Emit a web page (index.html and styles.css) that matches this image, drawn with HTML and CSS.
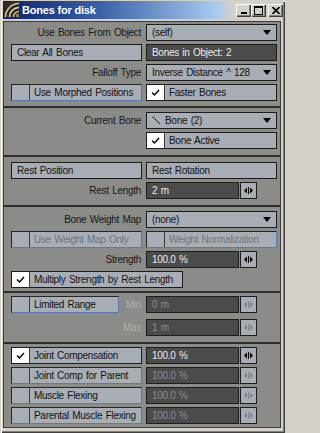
FILE: index.html
```html
<!DOCTYPE html>
<html>
<head>
<meta charset="utf-8">
<link rel="stylesheet" href="styles.css">
</head>
<body>
<div class="window">
  <div class="titlebar">
    <svg class="appicon" width="16" height="16" viewBox="0 0 16 16">
      <rect width="16" height="16" fill="#2e2b26"/>
      <path d="M1.5 15 A13.5 13.5 0 0 1 15 1.5" fill="none" stroke="#cfc39a" stroke-width="1.6"/>
      <path d="M5.5 15 A9.5 9.5 0 0 1 15 5.5" fill="none" stroke="#e4dcc0" stroke-width="1.6"/>
      <path d="M9.5 15 A5.5 5.5 0 0 1 15 9.5" fill="none" stroke="#bfb28a" stroke-width="1.6"/>
      <rect x="12" y="12" width="3" height="3" fill="#8a7f62"/>
    </svg>
    <span class="title">Bones for disk</span>
    <div class="capbtns">
      <div class="capbtn"><svg width="8" height="8" viewBox="0 0 8 8"><rect x="1" y="6" width="6" height="2" fill="#000"/></svg></div>
      <div class="capbtn"><svg width="9" height="9" viewBox="0 0 9 9"><rect x="0.5" y="0.5" width="8" height="8" fill="none" stroke="#000"/><rect x="0" y="0" width="9" height="2" fill="#000"/></svg></div>
      <div class="capbtn close"><svg width="8" height="7" viewBox="0 0 8 7"><path d="M0.5 0 L7.5 7 M7.5 0 L0.5 7" stroke="#000" stroke-width="1.6"/></svg></div>
    </div>
  </div>

  <div class="panel">
    <div class="sec sec1">
      <div class="row">
        <div class="lbl">Use Bones From Object</div>
        <div class="ctl drop"><span class="dt">(self)</span><span class="arr"><svg width="8" height="5" viewBox="0 0 8 5"><path d="M0 0 H8 L4 5 Z" fill="#000"/></svg></span></div>
      </div>
      <div class="row">
        <div class="ctl btn">Clear All Bones</div>
        <div class="ctl field">Bones in Object: 2</div>
      </div>
      <div class="row">
        <div class="lbl">Falloff Type</div>
        <div class="ctl drop"><span class="dt">Inverse Distance ^ 128</span><span class="arr"><svg width="8" height="5" viewBox="0 0 8 5"><path d="M0 0 H8 L4 5 Z" fill="#000"/></svg></span></div>
      </div>
      <div class="row">
        <div class="ctl tog"><span class="box"></span><span class="tt">Use Morphed Positions</span></div>
        <div class="ctl tog on"><span class="box"><svg width="9" height="7" viewBox="0 0 9 7"><path d="M1 3.5 L3.5 6 L8 1" fill="none" stroke="#000" stroke-width="1.4"/></svg></span><span class="tt">Faster Bones</span></div>
      </div>
    </div>
    <div class="sep"></div>

    <div class="sec sec2">
      <div class="row">
        <div class="lbl">Current Bone</div>
        <div class="ctl drop"><svg class="boneico" width="9" height="9" viewBox="0 0 9 9"><path d="M2 0.5 L0.5 2 M1.5 1.5 L8 8" fill="none" stroke="#111" stroke-width="1"/></svg><span class="dt">Bone (2)</span><span class="arr"><svg width="8" height="5" viewBox="0 0 8 5"><path d="M0 0 H8 L4 5 Z" fill="#000"/></svg></span></div>
      </div>
      <div class="row">
        <div></div>
        <div class="ctl tog on"><span class="box"><svg width="9" height="7" viewBox="0 0 9 7"><path d="M1 3.5 L3.5 6 L8 1" fill="none" stroke="#000" stroke-width="1.4"/></svg></span><span class="tt">Bone Active</span></div>
      </div>
    </div>
    <div class="sep"></div>

    <div class="sec sec3">
      <div class="row">
        <div class="ctl btn">Rest Position</div>
        <div class="ctl btn">Rest Rotation</div>
      </div>
      <div class="row">
        <div class="lbl">Rest Length</div>
        <div class="num"><div class="ctl field">2 m</div><div class="spin"><svg width="9" height="7" viewBox="0 0 9 7"><path d="M0 3.5 L3 0.5 V6.5 Z M9 3.5 L6 0.5 V6.5 Z" fill="#000"/><rect x="4" y="0" width="1" height="7" fill="#000"/></svg></div></div>
      </div>
    </div>
    <div class="sep"></div>

    <div class="sec sec4">
      <div class="row">
        <div class="lbl">Bone Weight Map</div>
        <div class="ctl drop"><span class="dt">(none)</span><span class="arr"><svg width="8" height="5" viewBox="0 0 8 5"><path d="M0 0 H8 L4 5 Z" fill="#000"/></svg></span></div>
      </div>
      <div class="row">
        <div class="ctl tog dis"><span class="box"></span><span class="tt">Use Weight Map Only</span></div>
        <div class="ctl tog dis"><span class="box"></span><span class="tt">Weight Normalization</span></div>
      </div>
      <div class="row">
        <div class="lbl">Strength</div>
        <div class="num"><div class="ctl field">100.0 %</div><div class="spin"><svg width="9" height="7" viewBox="0 0 9 7"><path d="M0 3.5 L3 0.5 V6.5 Z M9 3.5 L6 0.5 V6.5 Z" fill="#000"/><rect x="4" y="0" width="1" height="7" fill="#000"/></svg></div></div>
      </div>
      <div class="row">
        <div class="ctl tog on wide"><span class="box"><svg width="9" height="7" viewBox="0 0 9 7"><path d="M1 3.5 L3.5 6 L8 1" fill="none" stroke="#000" stroke-width="1.4"/></svg></span><span class="tt">Multiply Strength by Rest Length</span></div>
      </div>
    </div>
    <div class="sep"></div>

    <div class="sec sec5">
      <div class="row">
        <div class="split">
          <div class="ctl tog short"><span class="box"></span><span class="tt">Limited Range</span></div>
          <div class="lbl dim">Min</div>
        </div>
        <div class="num"><div class="ctl field dis">0 m</div><div class="spin dis"><svg width="9" height="7" viewBox="0 0 9 7"><path d="M0 3.5 L3 0.5 V6.5 Z M9 3.5 L6 0.5 V6.5 Z" fill="#7c8088"/><rect x="4" y="0" width="1" height="7" fill="#7c8088"/></svg></div></div>
      </div>
      <div class="row">
        <div class="lbl dim">Max</div>
        <div class="num"><div class="ctl field dis">1 m</div><div class="spin dis"><svg width="9" height="7" viewBox="0 0 9 7"><path d="M0 3.5 L3 0.5 V6.5 Z M9 3.5 L6 0.5 V6.5 Z" fill="#7c8088"/><rect x="4" y="0" width="1" height="7" fill="#7c8088"/></svg></div></div>
      </div>
    </div>
    <div class="sep"></div>

    <div class="sec sec6">
      <div class="row">
        <div class="ctl tog on"><span class="box"><svg width="9" height="7" viewBox="0 0 9 7"><path d="M1 3.5 L3.5 6 L8 1" fill="none" stroke="#000" stroke-width="1.4"/></svg></span><span class="tt">Joint Compensation</span></div>
        <div class="num"><div class="ctl field">100.0 %</div><div class="spin"><svg width="9" height="7" viewBox="0 0 9 7"><path d="M0 3.5 L3 0.5 V6.5 Z M9 3.5 L6 0.5 V6.5 Z" fill="#000"/><rect x="4" y="0" width="1" height="7" fill="#000"/></svg></div></div>
      </div>
      <div class="row">
        <div class="ctl tog"><span class="box"></span><span class="tt">Joint Comp for Parent</span></div>
        <div class="num"><div class="ctl field dis">100.0 %</div><div class="spin dis"><svg width="9" height="7" viewBox="0 0 9 7"><path d="M0 3.5 L3 0.5 V6.5 Z M9 3.5 L6 0.5 V6.5 Z" fill="#7c8088"/><rect x="4" y="0" width="1" height="7" fill="#7c8088"/></svg></div></div>
      </div>
      <div class="row">
        <div class="ctl tog"><span class="box"></span><span class="tt">Muscle Flexing</span></div>
        <div class="num"><div class="ctl field dis">100.0 %</div><div class="spin dis"><svg width="9" height="7" viewBox="0 0 9 7"><path d="M0 3.5 L3 0.5 V6.5 Z M9 3.5 L6 0.5 V6.5 Z" fill="#7c8088"/><rect x="4" y="0" width="1" height="7" fill="#7c8088"/></svg></div></div>
      </div>
      <div class="row">
        <div class="ctl tog"><span class="box"></span><span class="tt">Parental Muscle Flexing</span></div>
        <div class="num"><div class="ctl field dis">100.0 %</div><div class="spin dis"><svg width="9" height="7" viewBox="0 0 9 7"><path d="M0 3.5 L3 0.5 V6.5 Z M9 3.5 L6 0.5 V6.5 Z" fill="#7c8088"/><rect x="4" y="0" width="1" height="7" fill="#7c8088"/></svg></div></div>
      </div>
    </div>
  </div>
</div>
</body>
</html>
```
FILE: styles.css
```css
html, body {
  margin: 0;
  padding: 0;
  background: #d4d0c8;
}
.window {
  width: 285px;
  height: 433px;
  box-sizing: border-box;
  padding: 1px 2px 5px 3px;
  background: #d4d0c8;
  display: flex;
  flex-direction: column;
  box-shadow: inset 1px 1px 0 #d4d0c8, inset 2px 2px 0 #ffffff, inset -1px -1px 0 #404040, inset -2px -2px 0 #808080;
  font-family: "Liberation Sans", Arial, sans-serif;
}
.titlebar {
  height: 18px;
  flex: none;
  display: flex;
  align-items: center;
  background: linear-gradient(90deg, #0a246a 0%, #3a62a8 35%, #a6caf0 76%, #d4d0c8 82%);
}
.appicon {
  flex: none;
  margin-left: 1px;
  display: block;
}
.title {
  margin-left: 2px;
  color: #ffffff;
  font-weight: bold;
  font-size: 11px;
  letter-spacing: -0.2px;
  white-space: nowrap;
}
.capbtns {
  margin-left: auto;
  display: flex;
  align-items: center;
}
.capbtn {
  width: 15px;
  height: 13px;
  box-sizing: border-box;
  background: #d4d0c8;
  display: flex;
  align-items: center;
  justify-content: center;
  box-shadow: inset 1px 1px 0 #ffffff, inset -1px -1px 0 #404040, inset -2px -2px 0 #808080;
}
.capbtn svg { display: block; }
.capbtn.close {
  margin-left: 2px;
}
.panel {
  flex: 1;
  margin-top: 2px;
  margin-right: 2px;
  background: #8b8b87;
  border: 1px solid #3c3c3c;
  display: flex;
  flex-direction: column;
}
.sec {
  display: flex;
  flex-direction: column;
  gap: 3px;
  padding-left: 7px;
  padding-right: 3px;
}
.sec1 { padding-top: 2px; padding-bottom: 5px; }
.sec2 { padding-top: 4px; padding-bottom: 6px; }
.sec3 { padding-top: 5px; padding-bottom: 6px; }
.sec4 { padding-top: 4px; padding-bottom: 3px; }
.sec5 { padding-top: 3px; padding-bottom: 6px; gap: 6px; }
.sec6 { padding-top: 3px; padding-bottom: 3px; }
.sep {
  height: 2px;
  background: #2e2e2e;
  flex: none;
}
.row {
  display: grid;
  grid-template-columns: 131px 131px;
  column-gap: 4px;
  height: 17px;
}
.lbl, .ctl {
  font-size: 10px;
  letter-spacing: -0.3px;
  word-spacing: 1px;
  white-space: nowrap;
}
.lbl {
  text-align: right;
  line-height: 17px;
  padding-right: 1px;
  color: #161616;
}
.lbl.dim {
  color: #b0b0ae;
}
.ctl {
  height: 17px;
  box-sizing: border-box;
  border: 1px solid #1c1c1c;
  background: #a8aeb6;
  color: #111111;
  display: flex;
  align-items: center;
  padding-left: 5px;
  overflow: hidden;
}
.field {
  background: #4b4b4b;
  color: #ececec;
}
.field.dis {
  color: #8e8e8e;
}
.drop .dt {
  flex: 1;
  overflow: hidden;
  white-space: nowrap;
}
.drop .arr {
  flex: none;
  width: 17px;
  display: flex;
  align-items: center;
  justify-content: flex-start;
  padding-left: 4px;
  box-sizing: border-box;
}
.drop .arr svg, .boneico { display: block; }
.boneico {
  flex: none;
  margin-right: 4px;
}
.tog {
  padding-left: 0;
  border-color: #262626 #5c78b0 #5c78b0 #262626;
}
.tog .box {
  flex: none;
  width: 18px;
  height: 100%;
  box-sizing: border-box;
  border-right: 1px solid #3a3a3a;
  display: flex;
  align-items: center;
  justify-content: center;
}
.tog .tt {
  padding-left: 4px;
}
.tog.on {
  border-color: #1c1c1c;
}
.tog.on .box {
  background: #ffffff;
}
.tog.dis .tt {
  color: #6e747c;
}
.tog.wide {
  width: 172px;
  grid-column: 1 / span 2;
}
.split {
  display: flex;
}
.tog.short {
  width: 108px;
  flex: none;
}
.split .lbl {
  flex: 1;
}
.num {
  display: flex;
  gap: 1px;
}
.num .field {
  width: 93px;
  flex: none;
}
.spin {
  width: 17px;
  height: 17px;
  box-sizing: border-box;
  border: 1px solid #1c1c1c;
  background: #a8aeb6;
  display: flex;
  align-items: center;
  justify-content: center;
}
.spin svg { display: block; }
```
